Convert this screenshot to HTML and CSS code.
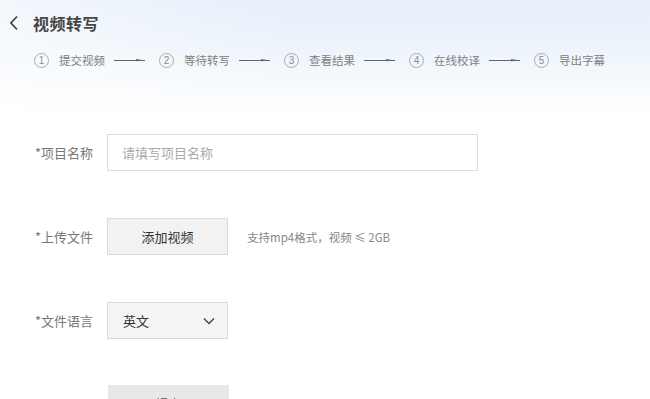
FILE: index.html
```html
<!DOCTYPE html>
<html lang="zh-CN">
<head>
<meta charset="utf-8">
<title>视频转写</title>
<link rel="stylesheet" href="styles.css">
</head>
<body>
<div class="page">
  <header class="header">
    <svg class="back" width="10" height="16" viewBox="0 0 10 16"><path d="M8 1.5 L2 8 L8 14.5" fill="none" stroke="#444" stroke-width="1.8"/></svg>
    <h1 class="title">视频转写</h1>
  </header>
  <ol class="steps">
    <li class="step"><span class="num">1</span><span class="step-text">提交视频</span></li>
    <li class="arrow"><svg width="32" height="6" viewBox="0 0 32 6"><path d="M0 3.5 H31" stroke="#666" stroke-width="1"/><path d="M22 2 L31 3.5 L22 4.2 Z" fill="#666"/></svg></li>
    <li class="step"><span class="num">2</span><span class="step-text">等待转写</span></li>
    <li class="arrow"><svg width="32" height="6" viewBox="0 0 32 6"><path d="M0 3.5 H31" stroke="#666" stroke-width="1"/><path d="M22 2 L31 3.5 L22 4.2 Z" fill="#666"/></svg></li>
    <li class="step"><span class="num">3</span><span class="step-text">查看结果</span></li>
    <li class="arrow"><svg width="32" height="6" viewBox="0 0 32 6"><path d="M0 3.5 H31" stroke="#666" stroke-width="1"/><path d="M22 2 L31 3.5 L22 4.2 Z" fill="#666"/></svg></li>
    <li class="step"><span class="num">4</span><span class="step-text">在线校译</span></li>
    <li class="arrow"><svg width="32" height="6" viewBox="0 0 32 6"><path d="M0 3.5 H31" stroke="#666" stroke-width="1"/><path d="M22 2 L31 3.5 L22 4.2 Z" fill="#666"/></svg></li>
    <li class="step"><span class="num">5</span><span class="step-text">导出字幕</span></li>
  </ol>

  <form class="form">
    <div class="row">
      <label class="label">*项目名称</label>
      <input class="input" type="text" placeholder="请填写项目名称">
    </div>
    <div class="row">
      <label class="label">*上传文件</label>
      <button type="button" class="btn">添加视频</button>
      <span class="hint">支持mp4格式，视频 ≤ 2GB</span>
    </div>
    <div class="row">
      <label class="label">*文件语言</label>
      <div class="select">
        <span>英文</span>
        <svg width="12" height="8" viewBox="0 0 12 8"><path d="M1 1.5 L6 6.5 L11 1.5" fill="none" stroke="#444" stroke-width="1.4"/></svg>
      </div>
    </div>
    <div class="row row-submit">
      <span class="label"></span>
      <button type="button" class="btn btn-submit">提交</button>
      <span class="hint">提交即表示您已阅读并同意<a class="link">《服务协议》</a></span>
    </div>
  </form>
</div>
</body>
</html>
```

FILE: styles.css
```css
* { box-sizing: border-box; }
html, body { margin: 0; padding: 0; }
body {
  font-family: "Noto Sans CJK SC", "Noto Sans", sans-serif;
  background: #fff;
  color: #333;
  overflow: hidden;
}
.page {
  width: 650px;
  height: 399px;
  background:
    linear-gradient(90deg, rgba(255,255,255,0.55) 0%, rgba(255,255,255,0) 45%),
    linear-gradient(180deg, #e5eefa 0%, #eff5fc 55px, #fafcfe 95px, #fff 120px);
}
.header {
  display: flex;
  align-items: center;
  height: 46px;
  padding-left: 9px;
  gap: 14px;
}
.back { display: block; }
.title {
  margin: 0;
  font-size: 16px;
  font-weight: 700;
  color: #454545;
  letter-spacing: 0.5px;
}
.steps {
  list-style: none;
  margin: 0;
  padding: 0 0 0 34px;
  display: flex;
  align-items: center;
  height: 28px;
}
.step {
  display: flex;
  align-items: center;
  gap: 10px;
}
.num {
  width: 15px;
  height: 15px;
  border: 1px solid #aaa;
  border-radius: 50%;
  font-size: 10px;
  line-height: 13px;
  text-align: center;
  color: #8a8a8a;
  font-family: "Liberation Sans", sans-serif;
}
.step-text {
  font-size: 11.5px;
  color: #808080;
}
.arrow {
  display: flex;
  margin: 0 13px 0 9px;
}
.arrow svg { display: block; }
.form {
  padding-top: 60px;
  display: flex;
  flex-direction: column;
  gap: 47px;
}
.row {
  display: flex;
  align-items: center;
  height: 37px;
}
.label {
  width: 107px;
  padding-left: 35px;
  font-size: 13px;
  color: #777;
}
.input {
  width: 371px;
  height: 37px;
  border: 1px solid #dcdcdc;
  background: #fff;
  padding: 0 14px;
  font-size: 13px;
  font-family: inherit;
  color: #333;
  outline: none;
}
.input::placeholder { color: #aaa; }
.btn {
  width: 121px;
  height: 37px;
  border: 1px solid #dadada;
  background: #f2f2f2;
  font-size: 13px;
  font-family: inherit;
  color: #333;
  padding: 0;
}
.hint {
  margin-left: 19px;
  font-size: 11.5px;
  color: #888;
}
.select {
  width: 121px;
  height: 37px;
  border: 1px solid #dadada;
  background: #f4f4f4;
  display: flex;
  align-items: center;
  justify-content: space-between;
  padding: 0 12px 0 15px;
  font-size: 13px;
  color: #333;
}
.select svg { display: block; }
.row-submit { margin-top: -1px; }
.btn-submit {
  background: #e8e8e8;
  border-color: #e8e8e8;
  color: #555;
  margin-left: 1px;
}
.link { color: #3a8ee6; }
```
